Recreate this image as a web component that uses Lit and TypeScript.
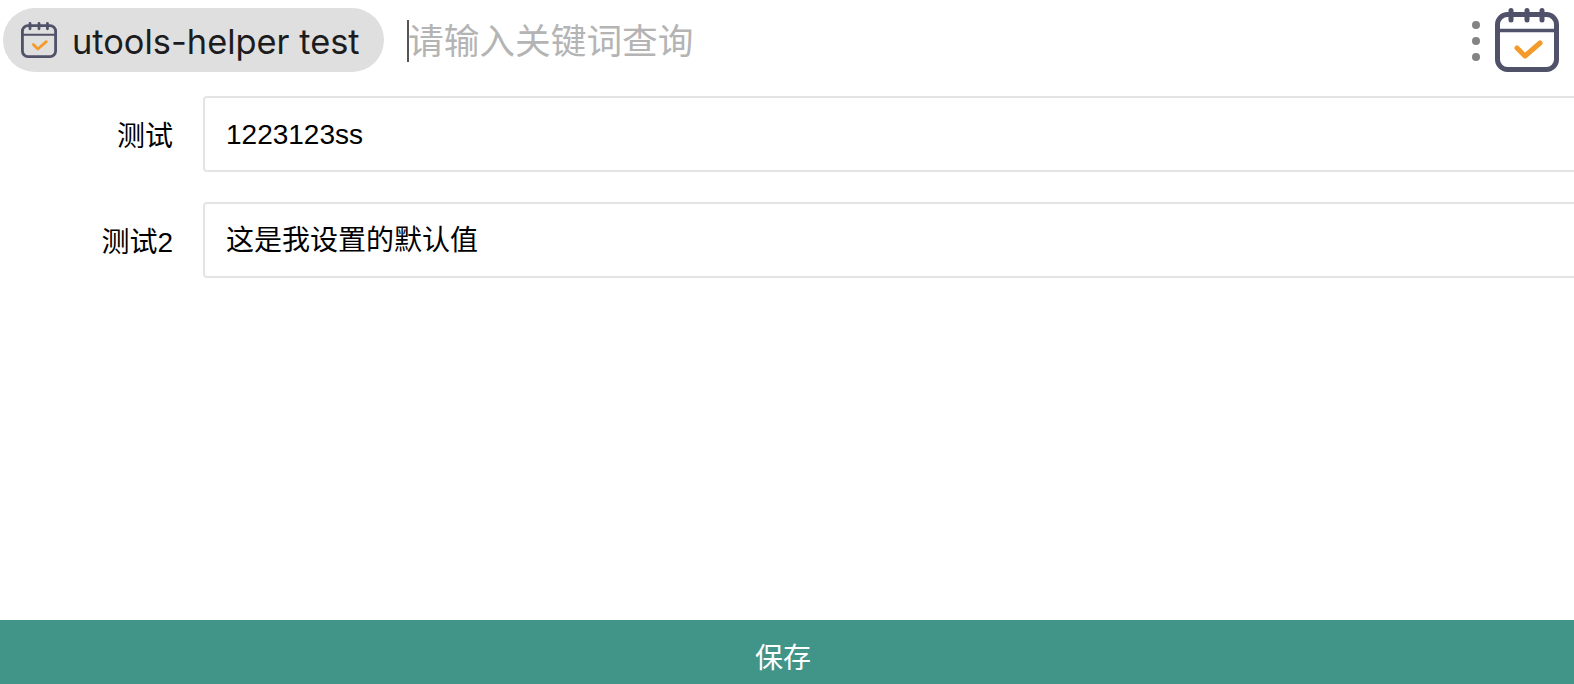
import { css, html, LitElement } from "lit";
import { customElement, property } from "lit/decorators.js";

function calendarIcon(size: number) {
  return html`<svg
    width=${size}
    height=${size}
    viewBox="0 0 64 64"
    fill="none"
    stroke-linecap="round"
    stroke-linejoin="round"
  >
    <rect x="2.5" y="6.5" width="59" height="55" rx="10" stroke="#50526a" stroke-width="5" />
    <path d="M2.5 22.5H61.5" stroke="#50526a" stroke-width="3.5" />
    <path d="M16 2.5V12M32 2.5V12M47 2.5V12" stroke="#50526a" stroke-width="5" />
    <path d="M22 40L30 48L45 35" stroke="#f49a2a" stroke-width="5" />
  </svg>`;
}

@customElement("form-field")
export class FormField extends LitElement {
  @property() label = "";
  @property() value = "";

  static styles = css`
    :host {
      display: flex;
      align-items: center;
      font-family: "Liberation Sans", "Noto Sans CJK SC", sans-serif;
      font-size: 28px;
      color: #000;
    }
    .label {
      flex: 0 0 173px;
      text-align: right;
      margin-right: 30px;
    }
    .box {
      flex: 0 0 1420px;
      box-sizing: border-box;
      height: 76px;
      padding: 2px 0 0 21px;
      line-height: 70px;
      border: 2px solid #e4e4e4;
      border-radius: 4px;
    }
  `;

  render() {
    return html`<div class="label">${this.label}</div>
      <div class="box">${this.value}</div>`;
  }
}

@customElement("app-root")
export class AppRoot extends LitElement {
  static styles = css`
    :host {
      display: flex;
      flex-direction: column;
      height: 100vh;
      overflow: hidden;
      background: #fff;
      font-family: Inter, "Noto Sans CJK SC", sans-serif;
    }
    .bar {
      flex: 0 0 96px;
      box-sizing: border-box;
      display: flex;
      align-items: flex-start;
      padding: 8px 15px 0 3px;
    }
    .pill {
      box-sizing: border-box;
      display: flex;
      align-items: center;
      gap: 15px;
      width: 381px;
      height: 64px;
      padding-left: 18px;
      border-radius: 32px;
      background: #dfdfdf;
      color: #1c1c1e;
      font-size: 34.4px;
      white-space: nowrap;
    }
    .pill span {
      padding-top: 2px;
    }
    .query {
      flex: 1;
      display: flex;
      align-items: center;
      height: 60px;
      margin-left: 23px;
      font-size: 35.7px;
      color: #b4b4b4;
    }
    .caret {
      width: 2px;
      height: 42px;
      margin: 6px -1px 0 0;
      background: #555;
    }
    .dots {
      display: flex;
      flex-direction: column;
      gap: 8px;
      margin: 13px 15px 0 0;
    }
    .dots span {
      width: 8px;
      height: 8px;
      border-radius: 50%;
      background: #848484;
    }
    .logo {
      line-height: 0;
    }
    .form {
      flex: 1;
      display: flex;
      flex-direction: column;
      gap: 30px;
    }
    .save {
      flex: 0 0 64px;
      box-sizing: border-box;
      display: flex;
      align-items: center;
      justify-content: center;
      padding: 8px 8px 0 0;
      background: #419488;
      color: #fff;
      font-size: 28px;
    }
  `;

  render() {
    return html`
      <div class="bar">
        <div class="pill">${calendarIcon(36)}<span>utools-helper test</span></div>
        <div class="query"><i class="caret"></i><span>请输入关键词查询</span></div>
        <div class="dots"><span></span><span></span><span></span></div>
        <div class="logo">${calendarIcon(64)}</div>
      </div>
      <div class="form">
        <form-field label="测试" value="1223123ss"></form-field>
        <form-field label="测试2" value="这是我设置的默认值"></form-field>
      </div>
      <div class="save">保存</div>
    `;
  }
}
